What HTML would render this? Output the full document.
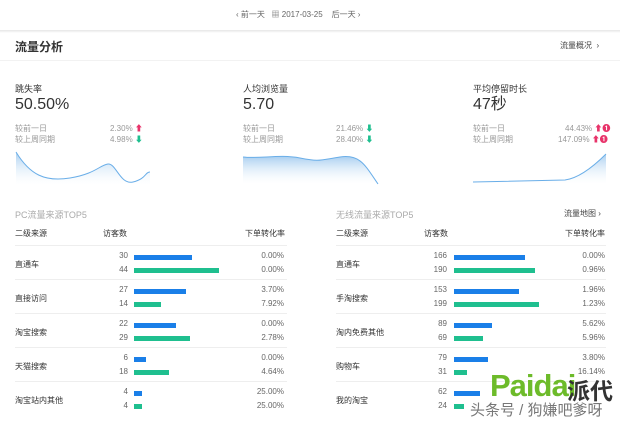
<!DOCTYPE html>
<html><head><meta charset="utf-8"><style>
*{margin:0;padding:0;box-sizing:border-box}
body{width:620px;height:421px;overflow:hidden;background:#fff;font-family:"Liberation Sans","Noto Sans CJK SC",sans-serif;color:#333;position:relative}
.a{position:absolute;white-space:nowrap}
.g{color:#999}
.s{font-size:8px}
.v{font-size:16px;line-height:20px;top:95px}
.hl{position:absolute;height:1px;background:#eee}
.bar{position:absolute;height:5px}
.b{background:#1a7fe8}.gr{background:#1fbf8f}
.n{position:absolute;font-size:8px;color:#666;text-align:right;width:30px}
.p{position:absolute;font-size:8px;color:#666;text-align:right;width:50px}
.nm{position:absolute;font-size:8px;color:#333}
</style></head><body>
<div class="a s" style="left:236px;top:9px;color:#666;font-size:8px">‹ 前一天 &nbsp;&nbsp;▦ 2017-03-25 &nbsp;&nbsp;&nbsp;后一天 ›</div>
<div class="a" style="left:0;top:30px;width:620px;height:3px;background:linear-gradient(#e6e6e6,#fff)"></div>
<div class="a" style="left:15px;top:38px;font-size:12px;font-weight:bold;color:#333">流量分析</div>
<div class="a s" style="left:560px;top:40px;color:#444">流量概况 &nbsp;›</div>
<div class="hl" style="left:0;top:60px;width:620px;background:#f2f2f2"></div>

<div class="a" style="left:15px;top:82px;font-size:9px">跳失率</div>
<div class="a v" style="left:15px">50.50%</div>
<div class="a s g" style="left:15px;top:123px">较前一日</div><div class="a s g" style="left:110px;top:123px">2.30% <b style="color:#e8336a">⬆</b></div>
<div class="a s g" style="left:15px;top:134px">较上周同期</div><div class="a s g" style="left:110px;top:134px">4.98% <b style="color:#1fbf8f">⬇</b></div>
<div class="a" style="left:243px;top:82px;font-size:9px">人均浏览量</div>
<div class="a v" style="left:243px">5.70</div>
<div class="a s g" style="left:243px;top:123px">较前一日</div><div class="a s g" style="left:336px;top:123px">21.46% <b style="color:#1fbf8f">⬇</b></div>
<div class="a s g" style="left:243px;top:134px">较上周同期</div><div class="a s g" style="left:336px;top:134px">28.40% <b style="color:#1fbf8f">⬇</b></div>
<div class="a" style="left:473px;top:82px;font-size:9px">平均停留时长</div>
<div class="a v" style="left:473px">47秒</div>
<div class="a s g" style="left:473px;top:123px">较前一日</div><div class="a s g" style="left:565px;top:123px">44.43% <b style="color:#e8336a">⬆❶</b></div>
<div class="a s g" style="left:473px;top:134px">较上周同期</div><div class="a s g" style="left:558px;top:134px">147.09% <b style="color:#e8336a">⬆❶</b></div>

<svg class="a" style="left:0;top:0" width="620" height="200">
<defs><linearGradient id="f" x1="0" y1="0" x2="0" y2="1"><stop offset="0" stop-color="#a9cff0"/><stop offset="1" stop-color="#fff" stop-opacity="0.2"/></linearGradient></defs>
<path d="M16 152 C30 175 45 182 70 178 S100 165 108 164 S120 185 133 182 S145 172 150 172 L150 185 L16 185Z" fill="url(#f)"/>
<path d="M16 152 C30 175 45 182 70 178 S100 165 108 164 S120 185 133 182 S145 172 150 172" fill="none" stroke="#6aaee8"/>
<path d="M243 157 C260 159 280 154 300 158 S320 160 340 157 S365 165 378 184 L243 184Z" fill="url(#f)"/>
<path d="M243 157 C260 159 280 154 300 158 S320 160 340 157 S365 165 378 184" fill="none" stroke="#6aaee8"/>
<path d="M473 182 L565 180 C580 178 595 165 606 154 L606 184 L473 184Z" fill="url(#f)"/>
<path d="M473 182 L565 180 C580 178 595 165 606 154" fill="none" stroke="#6aaee8"/>
</svg>

<div class="a s" style="left:15px;top:208px;color:#aaa;font-size:9px">PC流量来源TOP5</div>
<div class="a s" style="left:15px;top:228px">二级来源</div>
<div class="a s" style="left:103px;top:228px">访客数</div>
<div class="a s" style="left:245px;top:228px">下单转化率</div>
<div class="a s" style="left:336px;top:208px;color:#aaa;font-size:9px">无线流量来源TOP5</div>
<div class="a s" style="left:564px;top:208px;color:#444">流量地图 ›</div>
<div class="a s" style="left:336px;top:228px">二级来源</div>
<div class="a s" style="left:424px;top:228px">访客数</div>
<div class="a s" style="left:565px;top:228px">下单转化率</div>

<div id="rows"></div>
<script>
var L=[["直通车",30,44,"0.00%","0.00%"],["直接访问",27,14,"3.70%","7.92%"],["淘宝搜索",22,29,"0.00%","2.78%"],["天猫搜索",6,18,"0.00%","4.64%"],["淘宝站内其他",4,4,"25.00%","25.00%"]];
var R=[["直通车",166,190,"0.00%","0.96%"],["手淘搜索",153,199,"1.96%","1.23%"],["淘内免费其他",89,69,"5.62%","5.96%"],["购物车",79,31,"3.80%","16.14%"],["我的淘宝",62,24,"",""]];
var h="";
function t(D,x0,nr,bx,sc,pr,w){for(var i=0;i<5;i++){var y=246+i*34;var d=D[i];
h+='<div class="hl" style="left:'+x0+'px;top:'+(y-1)+'px;width:'+w+'px"></div>';
h+='<div class="nm" style="left:'+x0+'px;top:'+(y+13)+'px">'+d[0]+'</div>';
h+='<div class="n" style="left:'+(nr-30)+'px;top:'+(y+5)+'px">'+d[1]+'</div>';
h+='<div class="n" style="left:'+(nr-30)+'px;top:'+(y+19)+'px">'+d[2]+'</div>';
h+='<div class="bar b" style="left:'+bx+'px;top:'+(y+9)+'px;width:'+Math.round(d[1]*sc)+'px"></div>';
h+='<div class="bar gr" style="left:'+bx+'px;top:'+(y+22)+'px;width:'+Math.round(d[2]*sc)+'px"></div>';
h+='<div class="p" style="left:'+(pr-50)+'px;top:'+(y+5)+'px">'+d[3]+'</div>';
h+='<div class="p" style="left:'+(pr-50)+'px;top:'+(y+19)+'px">'+d[4]+'</div>';}}
t(L,15,128,134,1.93,284,272);t(R,336,447,454,0.427,605,270);
document.getElementById("rows").innerHTML=h;
</script>
<div class="a" style="left:490px;top:368px;font-size:31px;font-weight:bold;color:#6dbb2a;letter-spacing:-1px">Paidai</div>
<div class="a" style="left:567px;top:372px;font-size:23px;font-weight:bold;color:#333">派代</div>
<div class="a" style="left:470px;top:399px;font-size:15px;color:#777">头条号 / 狗嫌吧爹呀</div>
</body></html>
